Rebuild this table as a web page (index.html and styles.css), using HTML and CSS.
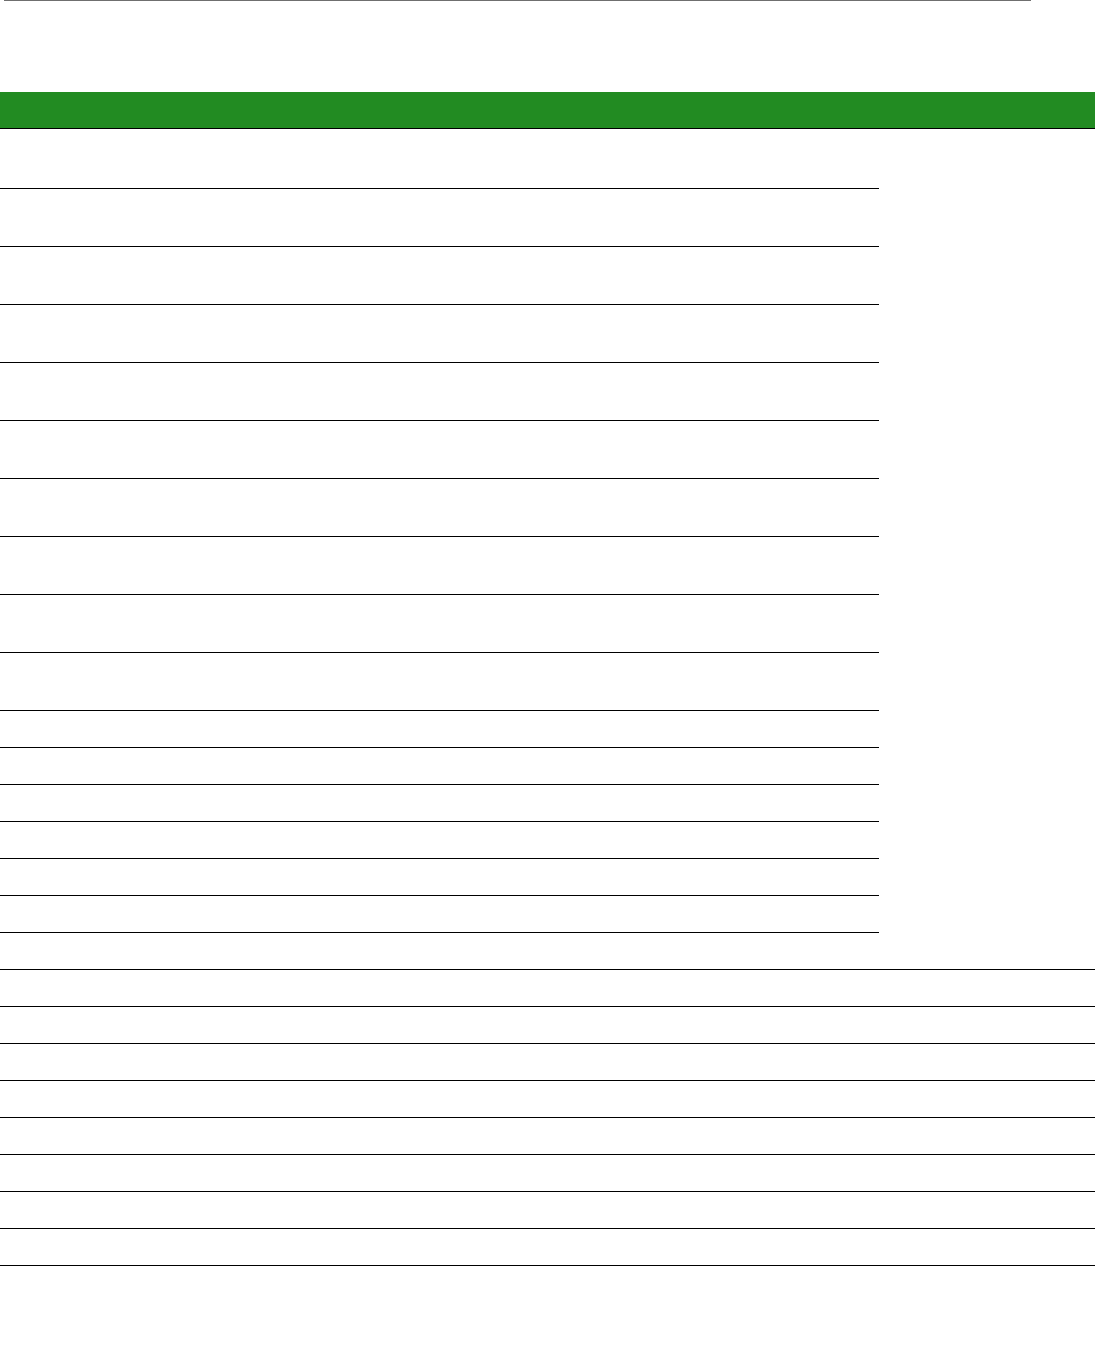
FILE: index.html
```html
<!DOCTYPE html>
<html lang="en">
<head>
    <meta charset="UTF-8">
    <meta name="viewport" content="width=device-width, initial-scale=1.0">
    <title>Sheet</title>
    <link rel="stylesheet" href="styles.css">
</head>
<body>
    <div class="rule"></div>

    <div class="sheet">
        <div class="sheet-head"></div>

        <!-- tall rows -->
        <div class="row tall first narrow"></div>
        <div class="row tall narrow"></div>
        <div class="row tall narrow"></div>
        <div class="row tall narrow"></div>
        <div class="row tall narrow"></div>
        <div class="row tall narrow"></div>
        <div class="row tall narrow"></div>
        <div class="row tall narrow"></div>
        <div class="row tall narrow"></div>
        <div class="row tall narrow"></div>

        <!-- short rows -->
        <div class="row short narrow"></div>
        <div class="row short narrow"></div>
        <div class="row short narrow"></div>
        <div class="row short narrow"></div>
        <div class="row short narrow"></div>
        <div class="row short narrow"></div>

        <div class="row short"></div>
        <div class="row short"></div>
        <div class="row short"></div>
        <div class="row short"></div>
        <div class="row short"></div>
        <div class="row short"></div>
        <div class="row short"></div>
        <div class="row short"></div>
        <div class="row short"></div>
    </div>
</body>
</html>
```

FILE: styles.css
```css
* {
    box-sizing: border-box;
    margin: 0;
    padding: 0;
}

body {
    font-family: 'Liberation Sans', Arial, sans-serif;
    background: #ffffff;
    color: #000;
    width: 1095px;
    min-height: 1352px;
}

.rule {
    margin-left: 4px;
    width: 1027px;
    height: 1px;
    background: #6f6f6f;
}

.sheet {
    margin-top: 91px;
    display: flex;
    flex-direction: column;
}

.sheet-head {
    height: 37px;
    background: #228b22;
    border-bottom: 1px solid #000;
}

.row {
    width: 100%;
    border-bottom: 1px solid #000;
}

.row.narrow {
    width: 879px;
}

.row.tall {
    height: 58px;
}

.row.tall.first {
    height: 60px;
}

.row.short {
    height: 37px;
}
```
